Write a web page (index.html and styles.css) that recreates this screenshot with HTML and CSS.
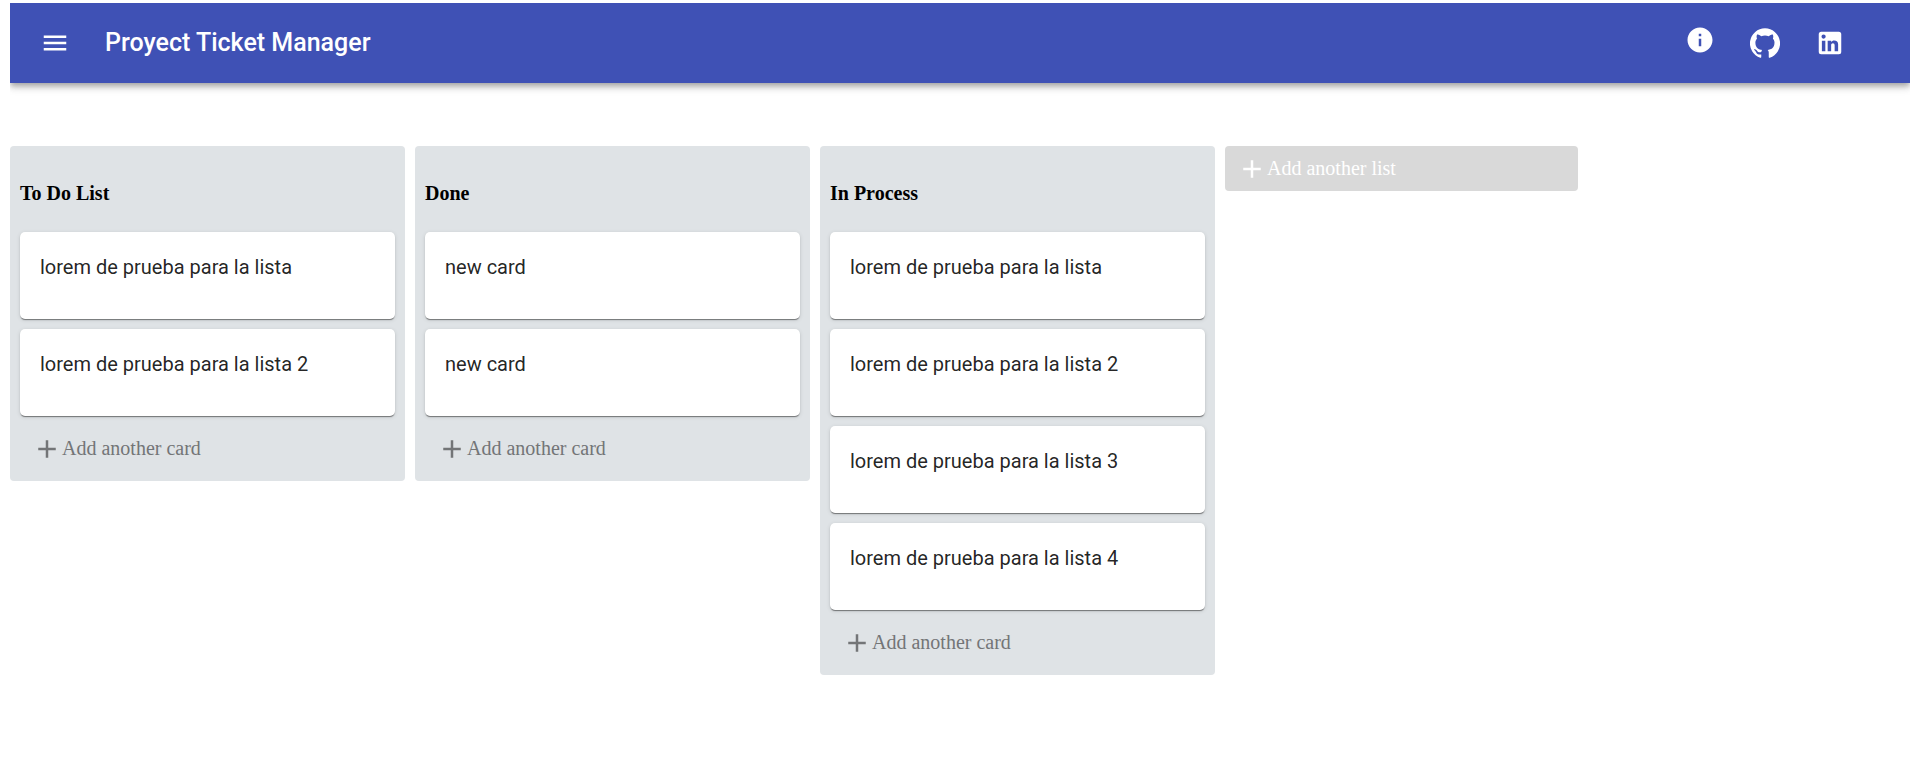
FILE: index.html
```html
<!DOCTYPE html>
<html lang="en">
<head>
<meta charset="utf-8">
<meta name="viewport" content="width=device-width, initial-scale=1">
<title>Proyect Ticket Manager</title>
<link rel="stylesheet" href="styles.css">
</head>
<body>
<svg class="sprite" aria-hidden="true">
  <symbol id="add" viewBox="0 0 24 24"><path d="M19 13h-6v6h-2v-6H5v-2h6V5h2v6h6v2z"/></symbol>
</svg>
<header class="app-bar">
  <button class="icon-button" type="button" aria-label="Menu">
    <svg class="icon" viewBox="0 0 24 24"><path d="M3 18h18v-2H3v2zm0-5h18v-2H3v2zm0-7v2h18V6H3z"/></svg>
  </button>
  <h1 class="app-title">Proyect Ticket Manager</h1>
  <nav class="app-links" aria-label="Links">
    <button class="icon-button icon-button-info" type="button" aria-label="About">
      <svg class="icon" viewBox="0 0 24 24"><path d="M12 2C6.48 2 2 6.48 2 12s4.48 10 10 10 10-4.48 10-10S17.52 2 12 2zm1 15h-2v-6h2v6zm0-8h-2V7h2v2z"/></svg>
    </button>
    <a class="icon-button" href="#github" aria-label="GitHub">
      <svg class="icon" viewBox="0 0 24 24"><path d="M12 .3a12 12 0 0 0-3.8 23.4c.6.1.8-.3.8-.6v-2c-3.3.7-4-1.6-4-1.6-.6-1.4-1.4-1.8-1.4-1.8-1-.7.1-.7.1-.7 1.2 0 1.9 1.2 1.9 1.2 1 1.8 2.8 1.3 3.5 1 0-.8.4-1.3.7-1.6-2.7-.3-5.5-1.3-5.5-6 0-1.2.5-2.3 1.3-3.1-.2-.4-.6-1.6 0-3.2 0 0 1-.3 3.4 1.2a11.5 11.5 0 0 1 6 0c2.3-1.5 3.3-1.2 3.3-1.2.6 1.6.2 2.8 0 3.2.9.8 1.3 1.9 1.3 3.2 0 4.6-2.8 5.6-5.5 5.9.5.4.9 1 .9 2.2v3.3c0 .3.1.7.8.6A12 12 0 0 0 12 .3"/></svg>
    </a>
    <a class="icon-button" href="#linkedin" aria-label="LinkedIn">
      <svg class="icon" viewBox="0 0 24 24"><path d="M19 3a2 2 0 0 1 2 2v14a2 2 0 0 1-2 2H5a2 2 0 0 1-2-2V5a2 2 0 0 1 2-2h14m-.5 15.5v-5.3a3.26 3.26 0 0 0-3.26-3.26c-.85 0-1.84.52-2.32 1.3v-1.11h-2.79v8.37h2.79v-4.93c0-.77.62-1.4 1.39-1.4a1.4 1.4 0 0 1 1.4 1.4v4.93h2.79M6.88 8.56a1.68 1.68 0 0 0 1.68-1.68c0-.93-.75-1.69-1.68-1.69a1.69 1.69 0 0 0-1.69 1.69c0 .93.76 1.68 1.69 1.68m1.39 9.94v-8.37H5.5v8.37h2.77z"/></svg>
    </a>
  </nav>
</header>
<main class="board">
  <section class="list">
    <h2 class="list-title">To Do List</h2>
    <p class="card">lorem de prueba para la lista</p>
    <p class="card">lorem de prueba para la lista 2</p>
    <button class="add-button" type="button"><svg class="icon" aria-hidden="true"><use href="#add"/></svg>Add another card</button>
  </section>
  <section class="list">
    <h2 class="list-title">Done</h2>
    <p class="card">new card</p>
    <p class="card">new card</p>
    <button class="add-button" type="button"><svg class="icon" aria-hidden="true"><use href="#add"/></svg>Add another card</button>
  </section>
  <section class="list">
    <h2 class="list-title">In Process</h2>
    <p class="card">lorem de prueba para la lista</p>
    <p class="card">lorem de prueba para la lista 2</p>
    <p class="card">lorem de prueba para la lista 3</p>
    <p class="card">lorem de prueba para la lista 4</p>
    <button class="add-button" type="button"><svg class="icon" aria-hidden="true"><use href="#add"/></svg>Add another card</button>
  </section>
  <button class="add-button add-list" type="button"><svg class="icon" aria-hidden="true"><use href="#add"/></svg>Add another list</button>
</main>
</body>
</html>
```
FILE: styles.css
```css
* {
  box-sizing: border-box;
}

body {
  margin: 3px 10px 10px;
  background: #fff;
  font-family: "Liberation Serif", "Times New Roman", serif;
  font-size: 20px;
}

.sprite {
  display: none;
}

.icon {
  display: block;
  flex: none;
  width: 30px;
  height: 30px;
  fill: currentColor;
}

.app-bar {
  display: flex;
  align-items: center;
  min-height: 80px;
  padding: 0 50px 0 15px;
  background: #3f51b5;
  color: #fff;
  box-shadow: 0 3px 5px -1px rgba(0, 0, 0, 0.2), 0 5px 6px rgba(0, 0, 0, 0.14), 0 1px 13px rgba(0, 0, 0, 0.12);
}

.icon-button {
  padding: 15px;
  border: 0;
  background: none;
  color: inherit;
  cursor: pointer;
}

.icon-button-info {
  padding: 12px 15px 18px;
}

.app-title {
  flex: 1;
  margin: 0 20px;
  font: 500 25px/40px Roboto, sans-serif;
}

.app-links {
  display: flex;
  gap: 5px;
}

.board {
  display: flex;
  align-items: flex-start;
  gap: 10px;
  padding-top: 63px;
}

.list {
  display: flex;
  flex-direction: column;
  gap: 10px;
  flex: 0 1 395px;
  padding: 10px;
  border-radius: 4px;
  background: #dfe3e6;
}

.list-title {
  margin: 26px 0 17px;
  font-size: 20px;
  line-height: 23px;
}

.card {
  margin: 0;
  padding: 20px 20px 37px;
  border-radius: 5px;
  background: #fff;
  color: rgba(0, 0, 0, 0.87);
  font: 400 20px/30px Roboto, sans-serif;
  box-shadow: 0 2px 1px -1px rgba(0, 0, 0, 0.3), 0 1px 1px rgba(0, 0, 0, 0.2), 0 1px 4px rgba(0, 0, 0, 0.12);
}

.add-button {
  display: flex;
  align-items: center;
  height: 45px;
  padding: 0 12px;
  border: 0;
  border-radius: 4px;
  background: none;
  color: #737577;
  font: inherit;
  cursor: pointer;
}

.add-list {
  flex: 0 1 353px;
  background: #d9d9d9;
  color: #fff;
}
```
